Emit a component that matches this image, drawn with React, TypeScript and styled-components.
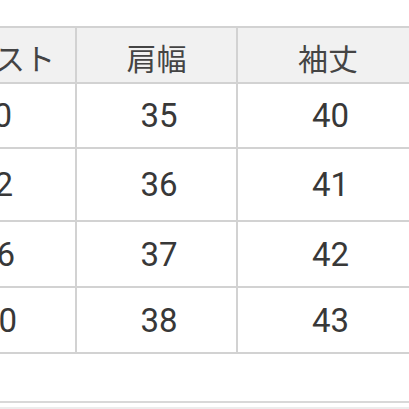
import { Fragment } from 'react';
import styled, { createGlobalStyle } from 'styled-components';

const GlobalStyle = createGlobalStyle`
	html,
	body {
		margin: 0;
		padding: 0;
		background: #fff;
		overflow: hidden;
	}
`;

type Row = {
	bust: string;
	bustInset: number;
	shoulder: string;
	sleeve: string;
};

// the photo is slightly skewed, so the first column drifts a little per row
const rows: Row[] = [
	{ bust: '100', bustInset: 63, shoulder: '35', sleeve: '40' },
	{ bust: '102', bustInset: 62, shoulder: '36', sleeve: '41' },
	{ bust: '106', bustInset: 60, shoulder: '37', sleeve: '42' },
	{ bust: '110', bustInset: 58, shoulder: '38', sleeve: '43' },
];

const App: React.FunctionComponent = () => {
	return (
		<>
			<GlobalStyle />
			<PageStyles>
				<TableStyles>
					<Cell $head $inset={20}>
						バスト
					</Cell>
					<Cell $head>肩幅</Cell>
					<Cell $head>袖丈</Cell>
					{rows.map(
						(row: Row): JSX.Element => (
							<Fragment key={row.shoulder}>
								<Cell $inset={row.bustInset}>{row.bust}</Cell>
								<Cell>{row.shoulder}</Cell>
								<Cell>{row.sleeve}</Cell>
							</Fragment>
						),
					)}
				</TableStyles>
				<Footer />
			</PageStyles>
		</>
	);
};

const PageStyles = styled.section`
	width: 409px;
	height: 409px;
	overflow: hidden;
	padding-top: 26px;
	box-sizing: border-box;
`;

const TableStyles = styled.div`
	display: grid;
	grid-template-columns: 125px 159px 180px;
	grid-template-rows: 54px 63px 71px 64px 64px;
	gap: 2px;
	padding: 2px 0;
	margin-left: -50px;
	width: 470px;
	background: #d2d2d2;
`;

const Cell = styled.div<{ $head?: boolean; $inset?: number }>`
	display: flex;
	align-items: center;
	justify-content: ${(p) => (p.$inset !== undefined ? 'flex-end' : 'center')};
	padding-right: ${(p) => (p.$inset !== undefined ? `${p.$inset}px` : '0')};
	padding-left: ${(p) => (p.$head || p.$inset !== undefined ? '0' : '5px')};
	padding-top: ${(p) => (p.$head ? '4px' : '0')};
	box-sizing: border-box;
	overflow: hidden;
	white-space: nowrap;
	background: ${(p) => (p.$head ? '#f1f1f1' : '#ffffff')};
	color: ${(p) => (p.$head ? '#444444' : '#383838')};
	font-family: ${(p) =>
		p.$head ? '"Noto Sans CJK JP", "Noto Sans", sans-serif' : 'Roboto, "Noto Sans", sans-serif'};
	font-size: ${(p) => (p.$head ? '30px' : '33px')};
	line-height: 1;
`;

const Footer = styled.div`
	margin-top: 47px;
	height: 4px;
	border-top: 2px solid #d8d8d8;
	border-bottom: 3px solid #ececec;
`;

export default App;
